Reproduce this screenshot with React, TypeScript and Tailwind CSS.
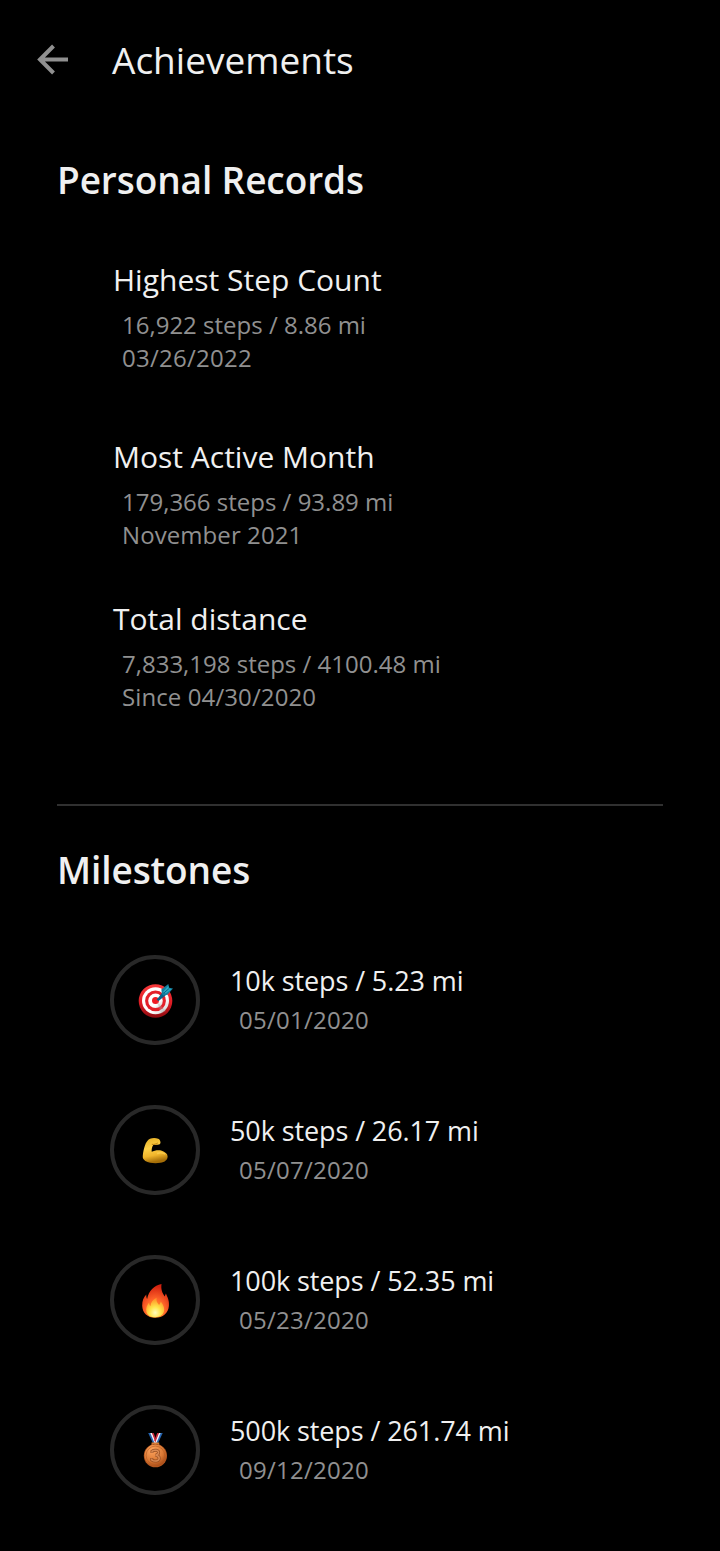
import type { ReactNode } from "react";

const records = [
  { title: "Highest Step Count", value: "16,922 steps / 8.86 mi", when: "03/26/2022", height: "h-[177px]", tracking: "tracking-[0.25px]" },
  { title: "Most Active Month", value: "179,366 steps / 93.89 mi", when: "November 2021", height: "h-[162px]", tracking: "tracking-[0.08px]" },
  { title: "Total distance", value: "7,833,198 steps / 4100.48 mi", when: "Since 04/30/2020", height: "h-[205px]", tracking: "tracking-[0.1px]" },
];

function Target() {
  return (
    <svg width="50" height="50" viewBox="0 0 50 50">
      <defs>
        <linearGradient id="target-red" x1="0" y1="0" x2="0" y2="1">
          <stop offset="0" stopColor="#f93a3c" />
          <stop offset=".55" stopColor="#e01d25" />
          <stop offset="1" stopColor="#8d0b10" />
        </linearGradient>
        <linearGradient id="target-white" x1="0" y1="0" x2="1" y2="1">
          <stop offset=".65" stopColor="#ffffff" />
          <stop offset="1" stopColor="#c4c4c4" />
        </linearGradient>
      </defs>
      <circle cx="25.5" cy="26" r="16.8" fill="url(#target-red)" />
      <circle cx="25.5" cy="25.8" r="13.5" fill="url(#target-white)" />
      <circle cx="25.5" cy="25.8" r="10.4" fill="#e3202a" />
      <circle cx="25.5" cy="25.8" r="7.3" fill="url(#target-white)" />
      <circle cx="25.5" cy="25.6" r="3.5" fill="#ef1b24" />
      <path d="m27 26.5 9 9.5-5 2.5Z" fill="#a9a9a9" opacity=".35" />
      <path d="m26.6 24.7 7-8.8 3.6 3-8.6 7Z" fill="#07628a" />
      <path d="m32 19-.7-4.5 7-5.4.9 3.7 3.8.7-5.6 6.3-4.3.7Z" fill="#137f9f" />
      <path d="m33 17 5.3-6.2.4 2.8 3 .4-6 4.5Z" fill="#2aaac4" />
      <path d="m33.7 18.1 5.2-4.4" stroke="#096487" strokeWidth="1" />
    </svg>
  );
}

function Biceps() {
  return (
    <svg width="50" height="50" viewBox="0 0 50 50">
      <defs>
        <linearGradient id="arm" x1="0" y1="0" x2=".2" y2="1">
          <stop offset="0" stopColor="#e3ad23" />
          <stop offset=".45" stopColor="#ffd148" />
          <stop offset=".75" stopColor="#f0b52b" />
          <stop offset="1" stopColor="#a56e08" />
        </linearGradient>
      </defs>
      <path d="M20 13.8c2.3-1 5.5-1.1 8.2-.1 1.4.6 2.4 2.2 2.3 3.9-.1 1.4-1.1 2.2-2.7 2.2-1.8 0-2.6.4-4.5.2-1.4 1.8-1.8 4.3-1.6 6.8 2.7-1.3 6.8-2 10.1-1 3.1 1.1 5.6 2.8 5.8 5.4.2 3.4-2.8 6-7.3 6.6-5.3.8-11.1.3-15-1.9-1.9-1.2-2.9-2.7-2.5-5.3.7-6 2.5-14.8 7.2-16.8Z" fill="url(#arm)" />
      <path d="M21.8 19.3c2.5.4 4.4-.2 5.9-1.3" fill="none" stroke="#a96e08" strokeWidth=".9" />
      <path d="M27 28.5c3-1.3 6-.9 8.2.7" fill="none" stroke="#ffdd69" strokeWidth="1.5" opacity=".5" />
    </svg>
  );
}

function Flame() {
  return (
    <svg width="50" height="50" viewBox="0 0 50 50">
      <defs>
        <radialGradient id="flame-out" cx=".49" cy=".82" r=".76">
          <stop offset="0" stopColor="#ffb327" />
          <stop offset=".5" stopColor="#ff6429" />
          <stop offset="1" stopColor="#d32210" />
        </radialGradient>
        <radialGradient id="flame-in" cx=".5" cy=".77" r=".72">
          <stop offset="0" stopColor="#fffdbd" />
          <stop offset=".42" stopColor="#ffe44b" />
          <stop offset="1" stopColor="#ff8f25" />
        </radialGradient>
      </defs>
      <path d="M31.5 9c-.7 5.9.8 8.7 3.2 12.5.5-1.1.8-2.3 1.2-3 1.8 4 3.5 7.2 3 12.5-.5 7-6 11.8-13.7 11.8S12.4 38 12.2 30.8c-.1-4.8 1.4-8.6 4.1-11.2-.1 1.8.2 3.2.8 4.4C18.8 15.6 24 10.5 31.5 9Z" fill="url(#flame-out)" />
      <path d="M26.7 22.7c-.7 2.8.3 5.2 2.4 7.2.8-.8 1.4-2.1 1.7-3.3 3 3.7 4.1 7.2 3 10.5-1.1 3.4-4.2 5.1-8.5 5.1-4.6 0-7.9-1.8-8.9-5.5-.8-3.4.7-6.8 2.7-9.2.1 1.6.5 2.9 1.4 3.6.2-3.8 2.2-6.7 6.2-8.4Z" fill="url(#flame-in)" />
    </svg>
  );
}

function Medal() {
  return (
    <svg width="50" height="50" viewBox="0 0 50 50">
      <defs>
        <radialGradient id="medal-face" cx=".35" cy=".25" r=".8">
          <stop offset="0" stopColor="#ffa45e" />
          <stop offset=".65" stopColor="#d97834" />
          <stop offset="1" stopColor="#a94b17" />
        </radialGradient>
      </defs>
      <path d="M18.2 8h2.2l5 10h-2.6Z" fill="#2464b1" />
      <path d="M20.2 8h2l4.3 10h-2Z" fill="#f2f2f6" />
      <path d="M22 8h1.7l2.7 7.6-.9 2Z" fill="#cf273d" />
      <path d="M32.7 8h-2.2l-5 10h2.6Z" fill="#2464b1" />
      <path d="M30.7 8h-2l-4.3 10h2Z" fill="#f2f2f6" />
      <path d="M28.9 8h-1.7l-2.8 7.6.9 2Z" fill="#cf273d" />
      <path d="M22.3 20v-1.8h6.2V20" fill="none" stroke="#d37935" strokeWidth="1.5" />
      <circle cx="25.4" cy="30.7" r="11.6" fill="#b4571f" />
      <circle cx="25.4" cy="30.3" r="10.8" fill="url(#medal-face)" />
      <circle cx="25.4" cy="30.4" r="9.3" fill="none" stroke="#b45a22" strokeWidth=".6" />
      <path d="M22 28v-1.8c2-1.5 6.6-1.4 6.6 1.3 0 1.7-1.1 2.5-3 2.8 2.4.3 3.6 1.3 3.6 2.9 0 3.2-4.9 3.6-7.4 1.8v-1.9" fill="none" stroke="#985024" strokeWidth="3" />
      <path d="M22 27.7v-1.5c2-1.5 6.6-1.4 6.6 1.3 0 1.7-1.1 2.5-3 2.8 2.4.3 3.6 1.3 3.6 2.9 0 3.2-4.9 3.6-7.4 1.8v-1.5" fill="none" stroke="#d98953" strokeWidth="1.5" />
    </svg>
  );
}

const milestones: { title: string; date: string; icon: ReactNode }[] = [
  { title: "10k steps / 5.23 mi", date: "05/01/2020", icon: <Target /> },
  { title: "50k steps / 26.17 mi", date: "05/07/2020", icon: <Biceps /> },
  { title: "100k steps / 52.35 mi", date: "05/23/2020", icon: <Flame /> },
  { title: "500k steps / 261.74 mi", date: "09/12/2020", icon: <Medal /> },
];

export default function App() {
  return (
    <div className="h-[1551px] w-[720px] overflow-hidden bg-black font-['Open_Sans',sans-serif] text-[#f0f0f0]">
      <header className="flex h-[120px] items-center pl-[37px]">
        <button aria-label="Back" className="w-[75px]">
          <svg width="32" height="32" viewBox="0 0 32 32" fill="none" stroke="#909090" strokeWidth="4">
            <path d="M31 15.5H4M16.5 2 3 15.5 16.5 29" />
          </svg>
        </button>
        <h1 className="text-[37px] leading-[50px]">Achievements</h1>
      </header>

      <section className="px-[57px] pt-[35px]">
        <h2 className="h-[105px] text-[37px] leading-[50px] font-semibold tracking-[-0.1px]">Personal Records</h2>
        <div className="pl-14">
          {records.map((r) => (
            <article key={r.title} className={r.height}>
              <h3 className="mb-[9px] text-[30px] leading-[39px]">{r.title}</h3>
              <div className="pl-[9px] text-[24px] leading-[33px] text-[#909090]">
                <p>{r.value}</p>
                <p className={r.tracking}>{r.when}</p>
              </div>
            </article>
          ))}
        </div>
      </section>

      <hr className="mx-[57px] border-0 border-t-2 border-[#303030]" />

      <section className="px-[57px] pt-[39px]">
        <h2 className="h-[110px] text-[37px] leading-[50px] font-semibold tracking-[-0.1px]">Milestones</h2>
        <ul className="flex flex-col gap-[60px] pl-[53px]">
          {milestones.map((m) => (
            <li key={m.title} className="flex h-[90px] gap-[30px]">
              <div className="flex size-[90px] items-center justify-center rounded-full border-4 border-[#282828]">
                {m.icon}
              </div>
              <div className="pt-2">
                <h3 className="text-[27px] leading-[36px] tracking-[-0.1px]">{m.title}</h3>
                <p className="mt-1 pl-[9px] text-[24px] leading-[33px] tracking-[0.25px] text-[#909090]">{m.date}</p>
              </div>
            </li>
          ))}
        </ul>
      </section>
    </div>
  );
}
